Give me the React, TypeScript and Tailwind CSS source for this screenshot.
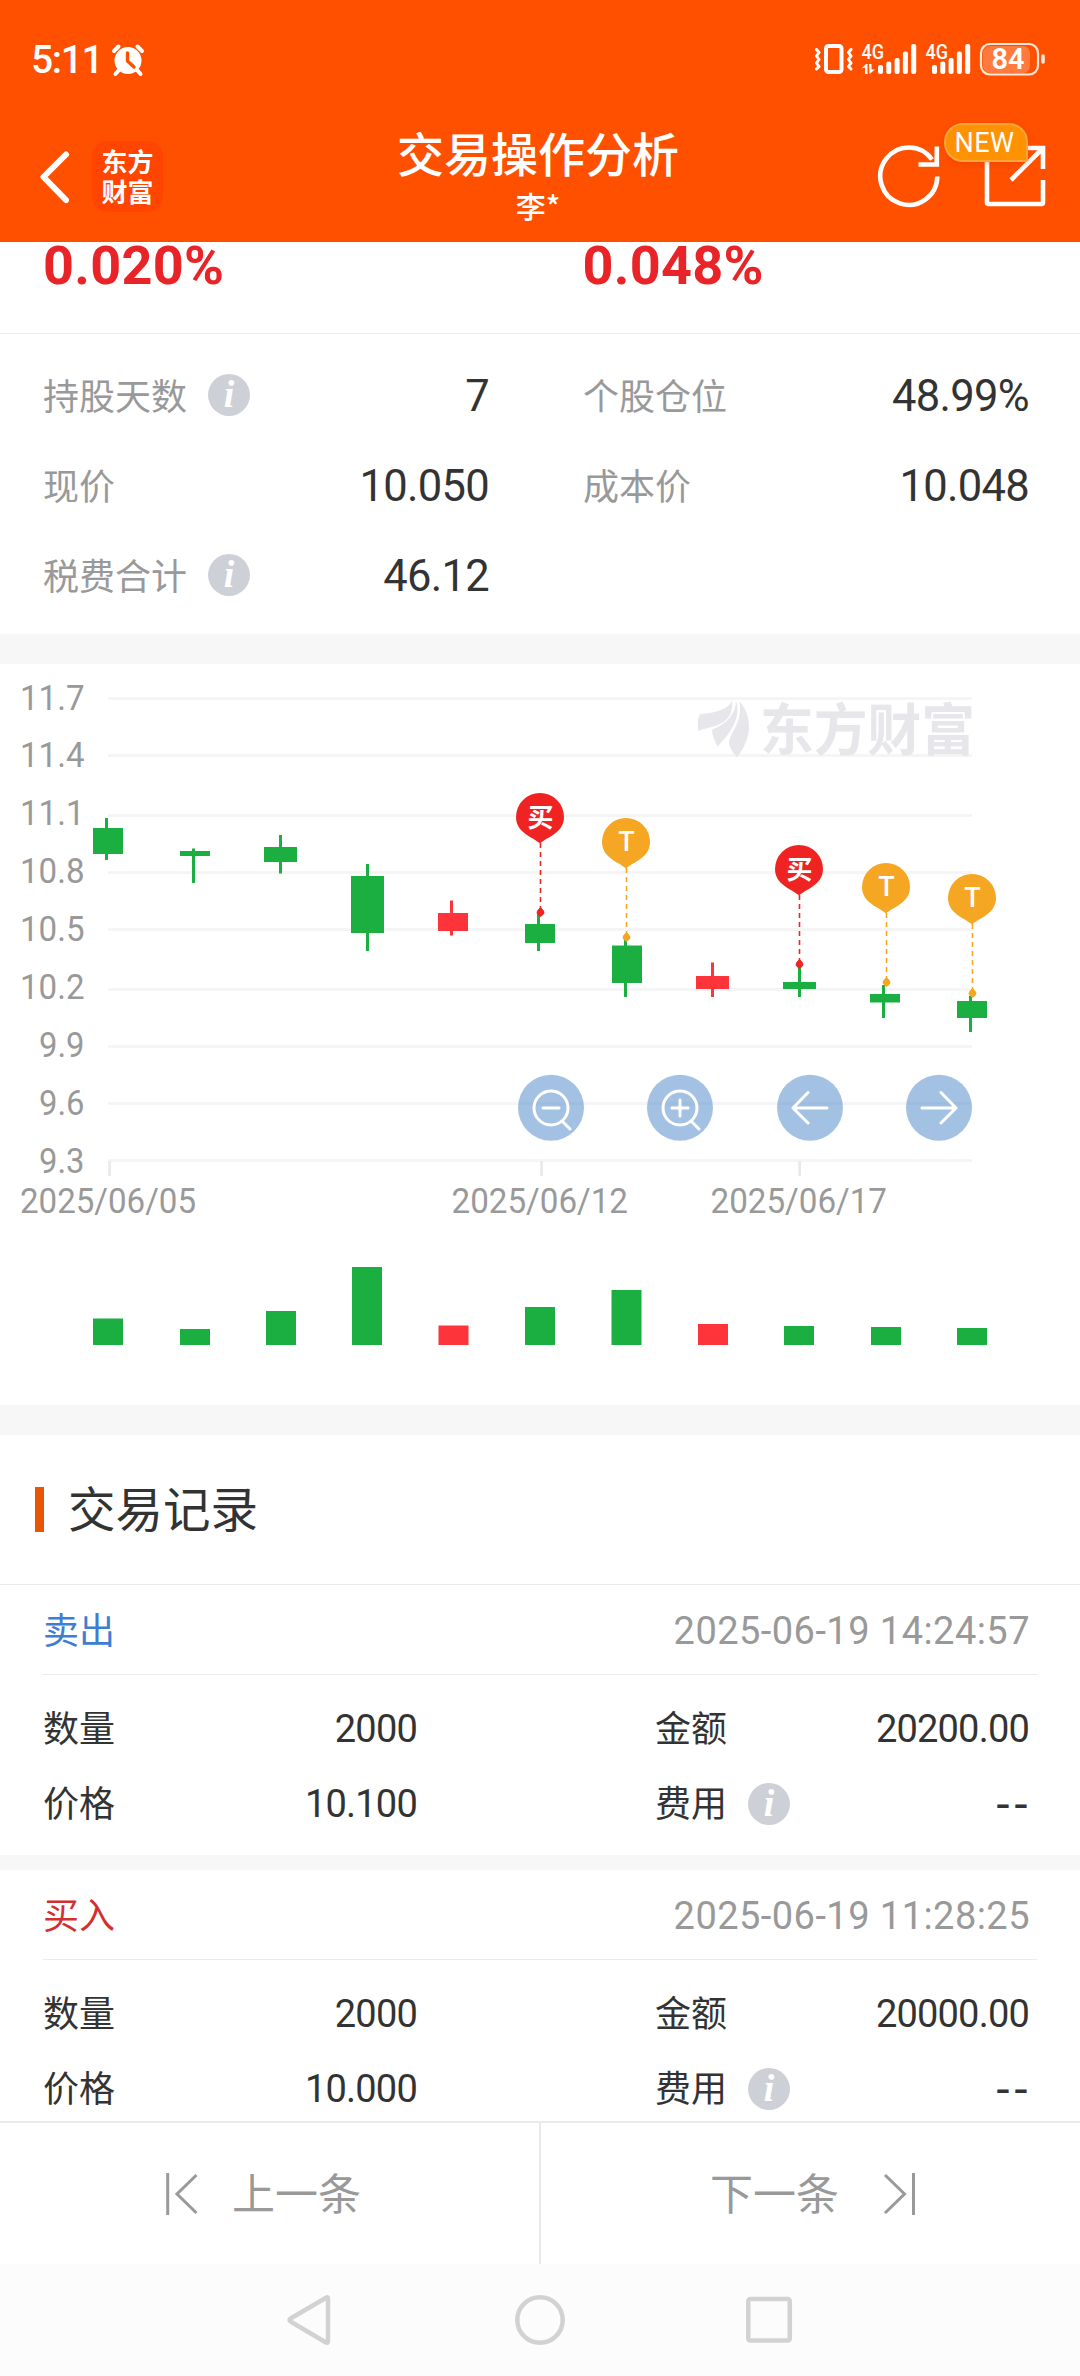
import React from "react";

const GREEN = "#1aaf40";
const RED = "#fd3439";

function StatusIcons() {
  const bars = [65, 61.5, 58, 51.5, 44];
  return (
    <svg width="232" height="40" viewBox="815 40 232 40" fill="none" stroke="#fff" strokeLinecap="round" strokeLinejoin="round">
      <rect x="826" y="46" width="15.500" height="26" rx="2.500" strokeWidth="4" />
      <path d="M816.500 49.500l2.500 3-2.500 3.500 2.500 3.500-2.500 3.500 2.500 3.500-2.500 2.500M851 49.500l-2.500 3 2.500 3.500-2.500 3.500 2.500 3.500-2.500 3.500 2.500 2.500" strokeWidth="3" />
      <g fill="#fff" stroke="none" fontFamily="Roboto, sans-serif">
        <text x="861.500" y="59" fontSize="20" fontWeight="500" textLength="22.500" lengthAdjust="spacingAndGlyphs">4G</text>
        <text x="925.500" y="59" fontSize="20" fontWeight="500" textLength="22.500" lengthAdjust="spacingAndGlyphs">4G</text>
        {bars.map((y, i) => (
          <g key={y}>
            <rect x={878 + i * 8.3} y={y} width="5" height={74 - y} rx="2" />
            <rect x={932 + i * 8.3} y={y} width="5" height={74 - y} rx="2" />
          </g>
        ))}
        <path d="M861.500 68.500l4.500-4.500h1.500v10H865v-6.500z M869 64h2.500v5.500h3.500L869.500 74z" />
      </g>
      <rect x="983" y="46" width="47" height="27" rx="7" fill="#ff7a3c" stroke="none" />
      <rect x="981" y="44" width="57" height="30.500" rx="9" stroke="#ffe9dd" strokeWidth="2.200" />
      <path d="M1043 56v6" strokeWidth="3.600" stroke="#ffe9dd" />
      <text x="991.500" y="69" fontFamily="Roboto, sans-serif" fontSize="29" fontWeight="600" fill="#fff" stroke="none" textLength="33" lengthAdjust="spacingAndGlyphs">84</text>
    </svg>
  );
}

function AlarmIcon() {
  return (
    <svg width="34" height="34" viewBox="0 0 34 34" fill="none" strokeLinecap="round" strokeLinejoin="round">
      <circle cx="17" cy="17.500" r="13.500" fill="#fff" />
      <path d="M8 27l-3.500 4M26 27l3.500 4M3 8l4.500-4.500M31 8l-4.500-4.500" stroke="#fff" strokeWidth="4" />
      <path d="M16.500 10v8l6.500 6" stroke="#ff5000" strokeWidth="3.400" />
    </svg>
  );
}

function Header() {
  return (
    <header className="flex h-[242px] shrink-0 flex-col bg-[#ff5000] text-white">
      <div className="flex h-[120px] items-center justify-between pl-[31px] pr-[33px]">
        <div className="flex items-center">
          <span className="w-[69px] font-[Roboto] text-[39px] font-medium leading-none tracking-[-1.4px]">5:11</span>
          <span className="pl-[11px]"><AlarmIcon /></span>
        </div>
        <StatusIcons />
      </div>
      <div className="flex h-[122px] justify-between pl-[38px] pr-[34px]">
        <div className="flex w-[300px] pt-[21px]">
          <svg className="mt-[9px]" width="34" height="54" viewBox="38 150 34 54" fill="none" stroke="#fff" strokeWidth="6" strokeLinecap="round" strokeLinejoin="round">
            <path d="M66 154.500L43.500 177 66 200" />
          </svg>
          <div className="ml-5 flex h-[71px] w-[71px] flex-col items-center justify-center rounded-[15px] bg-[#ff4500] pb-[2px] text-[26px] font-bold leading-[30px]">
            <span>东方</span>
            <span>财富</span>
          </div>
        </div>
        <div className="flex flex-col items-center pt-[4px]">
          <h1 className="text-[47px] font-medium leading-[56px]">交易操作分析</h1>
          <div className="pt-[5px] text-[30px] font-medium leading-[40px]">李*</div>
        </div>
        <div className="flex w-[308px] justify-end">
          <div className="relative">
            <svg width="170" height="90" viewBox="876 120 170 90" fill="none" stroke="#fff" strokeWidth="4.600">
              <path d="M937.300 176.500A28.500 28.700 0 1 1 932 159.500" />
              <path d="M918.500 164.500H936.800V146.500" />
              <path d="M987 160V202.500Q987 204 988.500 204H1041.500Q1043 204 1043 202.500V180" />
              <path d="M1022 148H1043V169M1042.500 148.500L1011 180" />
            </svg>
            <span className="absolute left-[68px] top-[3px] flex h-[39px] w-[84px] items-center justify-center rounded-[19px] rounded-br-[3px] border-2 border-[#ffa53a] bg-[#ff9200] pr-[3px] pt-[2px] font-[Roboto] text-[27px] leading-none tracking-[0.5px] shadow-[0_2px_6px_rgba(200,40,0,0.25)]">
              NEW
            </span>
          </div>
        </div>
      </div>
    </header>
  );
}

function Info() {
  return (
    <span className="ml-[21px] flex h-[42px] w-[42px] items-center justify-center rounded-full bg-[#cdd1d7] pb-[2px] font-['Liberation_Serif'] text-[38px] font-bold italic leading-none text-white">
      i
    </span>
  );
}

function Stat({ label, value, info }: { label: string; value: string; info?: boolean }) {
  return (
    <div className="flex h-[90px] items-center justify-between">
      <div className="flex items-center text-[36px] leading-none text-[#999]">
        <span className="pb-[3px]">{label}</span>
        {info && <Info />}
      </div>
      <span className="pt-[4px] font-[Roboto] text-[43.5px] leading-none tracking-[-0.7px] text-[#333]">{value}</span>
    </div>
  );
}

const yLabels: [string, number][] = [
  ["11.7", 710], ["11.4", 767], ["11.1", 825], ["10.8", 883], ["10.5", 941],
  ["10.2", 999], ["9.9", 1057], ["9.6", 1115], ["9.3", 1173],
];
const grid = [697, 754, 814, 871, 928, 988, 1045, 1102, 1159];

// left, right, wick x, wick top, body top, body bottom, wick bottom, up, volume top, volume left
type Candle = [number, number, number, number, number, number, number, boolean, number, number];
const candles: Candle[] = [
  [93, 123, 106.5, 818, 828, 854, 860, false, 1318.500, 93],
  [180, 210, 193.5, 848.5, 851, 856, 883, false, 1329, 180],
  [264, 297, 280.5, 835, 847, 862, 873.5, false, 1311, 266],
  [351, 384, 367.5, 864, 876, 933, 951, false, 1267, 352],
  [438, 468, 451.5, 900.5, 913, 931, 935.5, true, 1325.5, 438.5],
  [525, 555, 538.5, 914, 924, 943, 951, false, 1307, 525],
  [612, 642, 625.5, 938, 945.5, 983, 997, false, 1290, 611.5],
  [696, 729, 712.5, 962.5, 976, 989, 997, true, 1324, 698],
  [783, 816, 799.5, 967, 982, 989, 997, false, 1326, 784],
  [870, 900, 883.5, 985, 994, 1002.500, 1018, false, 1327, 871],
  [957, 987, 970.5, 996, 1001, 1018, 1032, false, 1328, 957],
];

const pins = [
  { x: 540, top: 793, dot: 912, buy: true },
  { x: 626, top: 818, dot: 937, buy: false },
  { x: 799, top: 845, dot: 964, buy: true },
  { x: 886, top: 863, dot: 982, buy: false },
  { x: 972, top: 874, dot: 993, buy: false },
];

function Watermark() {
  return (
    <g fill="#e6e6eb">
      <path d="M698.500 731C697 722 698 717 700.500 714C716 713 729 709 732 700.500C733.500 713 728 721 718 725C710 728 703 728.500 698.500 731Z" />
      <path d="M736 701C740 712 737 727 717.500 746.500C714.500 741 712 735 712 729.500C724 725 735 717 736 701Z" />
      <path d="M739.500 701.500C746 708 749 718 749 727C749 738 743 750 737 757.500C732 751 728.500 746 729 742C731 731 743 722 739.500 701.500Z" />
      <text x="760" y="750" fontSize="56" fontWeight="700" textLength="215" lengthAdjust="spacingAndGlyphs">东方财富</text>
    </g>
  );
}

function Chart() {
  return (
    <svg className="block" width="1080" height="741" viewBox="0 664 1080 741">
      {grid.map((y) => <rect key={y} x="108" y={y} width="864" height="3" fill="#f5f5f5" />)}
      {[108.300, 540.300, 798.300].map((x) => <rect key={x} x={x} y="1161" width="2.700" height="15" fill="#e9e9e9" />)}
      <Watermark />
      <g fill="#999" fontFamily="Roboto, sans-serif" fontSize="35.500">
        {yLabels.map(([t, y]) => (
          <text key={t} x={t.length === 4 ? 20 : 39} y={y} textLength={t.length === 4 ? 64.5 : 45.500} lengthAdjust="spacingAndGlyphs">{t}</text>
        ))}
        <text x="20" y="1213" textLength="176" lengthAdjust="spacingAndGlyphs">2025/06/05</text>
        <text x="451.500" y="1213" textLength="176.500" lengthAdjust="spacingAndGlyphs">2025/06/12</text>
        <text x="710.500" y="1213" textLength="176.500" lengthAdjust="spacingAndGlyphs">2025/06/17</text>
      </g>
      {candles.map(([l, r, wx, wt, bt, bb, wb, up, vt, vl]) => (
        <g key={l} fill={up ? RED : GREEN}>
          <rect x={wx - 1.5} y={wt} width="3" height={wb - wt} />
          <rect x={l} y={bt} width={r - l} height={bb - bt} />
          <rect x={vl} y={vt} width="30" height={1345 - vt} />
        </g>
      ))}
      {pins.map(({ x, top, dot, buy }) => {
        const c = buy ? "#f02323" : "#f5a623";
        return (
          <g key={x} fill={c}>
            <path d={`M${x} ${top + 50.500}C${x - 7} ${top + 44} ${x - 24} ${top + 40} ${x - 24} ${top + 24}A24 24 0 0 1 ${x + 24} ${top + 24}C${x + 24} ${top + 40} ${x + 7} ${top + 44} ${x} ${top + 50.500}Z`} />
            <path d={`M${x + 0.5} ${top + 50}V${dot - 4}`} stroke={c} strokeWidth="1.600" strokeDasharray="5 4" />
            <path d={`M${x + 0.5} ${dot - 4.500}q4 3.500 3.500 5.500q-1 2-3.500 3.500q-2.500-1.500-3.500-3.500q-.500-2 3.500-5.500z`} stroke={c} strokeLinejoin="round" />
            <text x={x + 0.5} y={top + (buy ? 34 : 33)} fill="#fff" fontSize={buy ? 26 : 27} fontWeight={buy ? 600 : 500} textAnchor="middle" fontFamily={buy ? undefined : "Roboto, sans-serif"}>
              {buy ? "买" : "T"}
            </text>
          </g>
        );
      })}
      {[551, 680, 810, 939].map((x) => <circle key={x} cx={x} cy="1107.700" r="33" fill="#4883c7" fillOpacity="0.5" />)}
      <g fill="none" stroke="#fff" strokeWidth="3" strokeLinecap="round" strokeLinejoin="round">
        {[551, 680].map((x) => (
          <g key={x}>
            <circle cx={x} cy="1108" r="17" />
            <path d={`M${x + 11.500} 1121.500l7.500 7.500M${x - 8} 1108h16`} />
          </g>
        ))}
        <path d="M680 1100v16M827 1108H793M808 1092.500L793 1108l15 15M922 1108h34M941 1092.500l15 15.500-15 15" />
      </g>
    </svg>
  );
}

function Field({ label, value, info }: { label: string; value: string; info?: boolean }) {
  return (
    <div className="flex h-[75px] items-center justify-between text-[#333]">
      <div className="flex items-center text-[36px] leading-none">
        <span className="pb-[5px]">{label}</span>
        {info && <Info />}
      </div>
      {value === "--" ? (
        <span className="-mr-[2px] pb-[2px] font-['Liberation_Sans'] text-[46px] leading-none tracking-[2.5px]">--</span>
      ) : (
        <span className="font-[Roboto] text-[38px] leading-none tracking-[-0.8px]">{value}</span>
      )}
    </div>
  );
}

interface Trade { side: string; color: string; time: string; qty: string; amount: string; price: string }

function Record({ side, color, time, qty, amount, price }: Trade) {
  return (
    <article className="h-[270px]">
      <div className="ml-[43px] mr-[43px] flex h-[90px] items-center justify-between border-b border-[#ebebeb] pr-[7px]">
        <span className={`pb-[3px] text-[36px] leading-none ${color}`}>{side}</span>
        <span className="pt-[3px] font-[Roboto] text-[38px] leading-none tracking-[0.45px] text-[#999]">{time}</span>
      </div>
      <div className="grid grid-cols-[374px_374px] justify-between pl-[43px] pr-[51px] pt-[16px]">
        <Field label="数量" value={qty} />
        <Field label="金额" value={amount} />
        <Field label="价格" value={price} />
        <Field label="费用" value="--" info />
      </div>
    </article>
  );
}

export default function App() {
  return (
    <div className="flex h-[2376px] w-[1080px] flex-col overflow-hidden bg-white font-['Noto_Sans_CJK_SC',sans-serif]">
      <Header />
      <main className="min-h-0 flex-1">
        <div className="grid h-[92px] grid-cols-2 border-b border-[#ebebeb] pl-[43px] font-[Roboto] text-[54px] font-bold leading-[48px] tracking-[0.3px] text-[#e92428]">
          <span>0.020%</span>
          <span className="pl-[21px]">0.048%</span>
        </div>
        <div className="grid h-[300px] grid-cols-[446px_446px] content-start justify-between pl-[43px] pr-[51px] pt-4">
          <Stat label="持股天数" value="7" info />
          <Stat label="个股仓位" value="48.99%" />
          <Stat label="现价" value="10.050" />
          <Stat label="成本价" value="10.048" />
          <Stat label="税费合计" value="46.12" info />
        </div>
        <div className="h-[30px] bg-[#f7f7f7]" />
        <Chart />
        <div className="h-[30px] bg-[#f7f7f7]" />
        <div className="flex h-[150px] items-center border-b border-[#ebebeb] pl-[35px]">
          <span className="h-[45px] w-[9px] bg-[#e95504]" />
          <h2 className="pb-[6px] pl-6 text-[47.5px] leading-none text-[#333]">交易记录</h2>
        </div>
        <Record side="卖出" color="text-[#3d7ed3]" time="2025-06-19 14:24:57" qty="2000" amount="20200.00" price="10.100" />
        <div className="h-[15px] bg-[#f7f7f7]" />
        <Record side="买入" color="text-[#d32f2f]" time="2025-06-19 11:28:25" qty="2000" amount="20000.00" price="10.000" />
      </main>
      <div className="relative z-10 grid h-[143px] shrink-0 grid-cols-2 border-t-2 border-[#ebebeb] bg-white text-[43px] leading-none text-[#999]">
        <button className="flex items-center border-r border-[#e8e8e8] pl-[165px]">
          <svg width="34" height="44" viewBox="0 0 34 44" fill="none" stroke="#999" strokeWidth="3">
            <path d="M2.700 1v42M31.500 3L12 22l19.500 19" />
          </svg>
          <span className="pb-[4px] pl-[33px]">上一条</span>
        </button>
        <button className="flex items-center border-l border-[#e8e8e8] pl-[169px]">
          <span className="pb-[4px] pr-[44px]">下一条</span>
          <svg width="34" height="44" viewBox="0 0 34 44" fill="none" stroke="#999" strokeWidth="3">
            <path d="M30.500 1v42M2 3l19.500 19L2 41" />
          </svg>
        </button>
      </div>
      <nav className="relative z-10 flex h-[112px] shrink-0 items-center bg-[#fcfcfc] pl-[284px]">
        <svg width="512" height="56" viewBox="284 2292 512 56" fill="none" stroke="#d2d2d2" strokeWidth="4.500" strokeLinejoin="round">
          <path d="M326.500 2297.500Q328 2296.500 328 2299V2341Q328 2343.500 326 2342.500L290.500 2321.500Q288.500 2320 290.500 2318.500Z" />
          <circle cx="540" cy="2320" r="22.700" />
          <rect x="748.300" y="2299" width="41.500" height="41.500" rx="2" />
        </svg>
      </nav>
    </div>
  );
}
